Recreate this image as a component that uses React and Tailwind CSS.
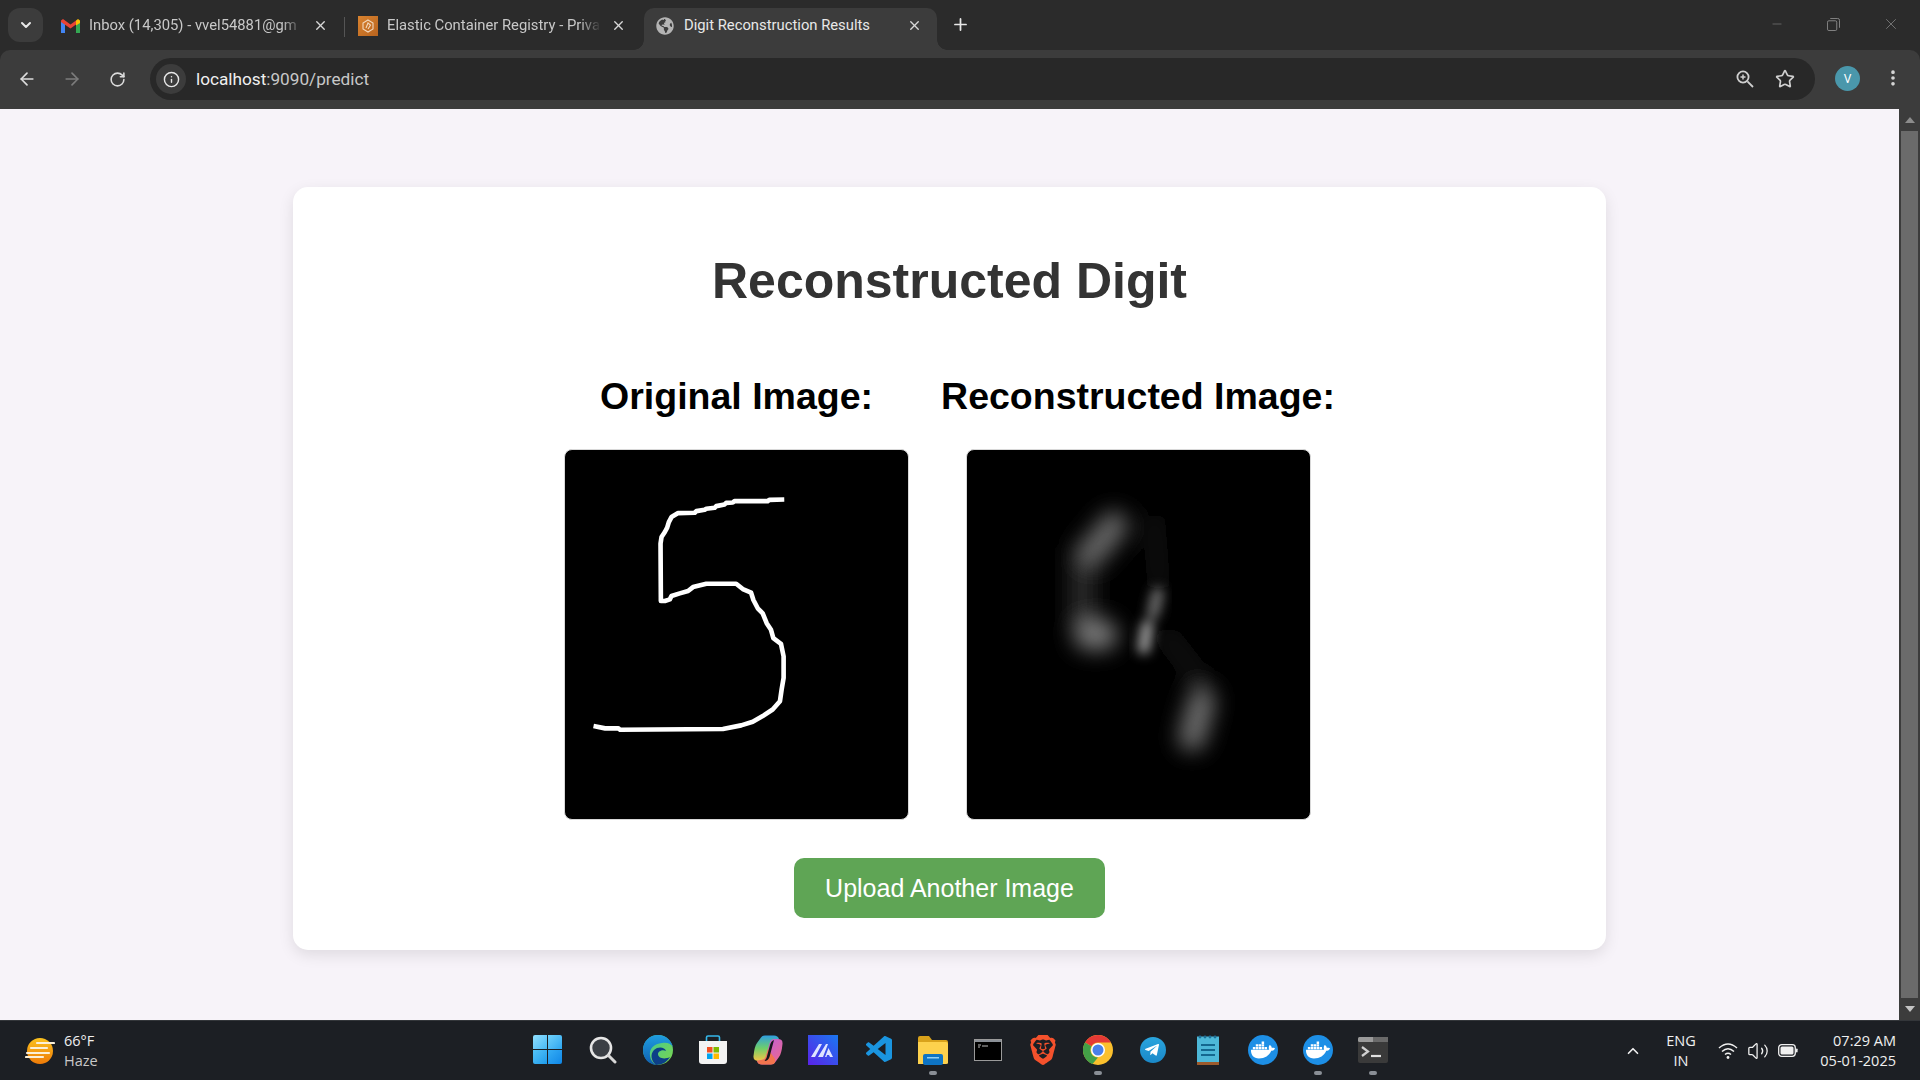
import React from 'react';
import { ArrowLeft, ArrowRight, RotateCw, Info, Star, X, Plus, ChevronDown, ChevronUp, Volume2, Minus, MoreVertical } from 'lucide-react';
import { FaDocker, FaTelegramPlane, FaGlobeAmericas } from 'react-icons/fa';
import { SiBrave } from 'react-icons/si';
import { VscVscode } from 'react-icons/vsc';

const FIVE = "705,177 660,178 655,182 600,182 555,182 550,186 530,187 525,192 500,197 495,202 470,205 465,208 440,212 435,217 385,218 365,230 357,245 352,262 345,275 335,290 332,310 333,483 345,483 360,478 365,468 390,460 415,453 430,441 470,431 560,431 580,447 605,458 612,480 625,505 640,520 652,550 665,570 672,595 695,612 703,650 703,715 697,750 692,785 670,810 640,830 610,847 575,858 520,869 210,871 205,867 165,867 130,860";

function Five() {
  return (
    <svg viewBox="44 28 1034 1112" className="block w-full h-full">
      <polyline points={FIVE} fill="none" stroke="#fff" strokeWidth="14" strokeLinejoin="round" />
    </svg>
  );
}

function Recon() {
  return (
    <svg viewBox="47 28 1034 1112" className="block w-full h-full">
      <defs>
        <filter id="b1" x="-100%" y="-100%" width="300%" height="300%"><feGaussianBlur stdDeviation="32" /></filter>
        <filter id="b2" x="-100%" y="-100%" width="300%" height="300%"><feGaussianBlur stdDeviation="18" /></filter>
      </defs>
      <g filter="url(#b1)" fill="none" strokeLinecap="round">
        <line x1="395" y1="350" x2="395" y2="540" stroke="#2a2a2a" strokeWidth="80" />
        <line x1="610" y1="240" x2="625" y2="430" stroke="#141414" strokeWidth="35" />
        <line x1="650" y1="590" x2="750" y2="720" stroke="#161616" strokeWidth="45" />
        <line x1="490" y1="255" x2="425" y2="335" stroke="#666" strokeWidth="85" />
        <line x1="415" y1="585" x2="455" y2="585" stroke="#7a7a7a" strokeWidth="90" />
        <line x1="755" y1="785" x2="725" y2="895" stroke="#6e6e6e" strokeWidth="80" />
      </g>
      <g filter="url(#b2)" fill="none" strokeLinecap="round">
        <line x1="622" y1="460" x2="608" y2="520" stroke="#6a6a6a" strokeWidth="38" />
        <line x1="590" y1="560" x2="580" y2="625" stroke="#a0a0a0" strokeWidth="36" />
      </g>
    </svg>
  );
}

function Gmail() {
  return (
    <svg viewBox="0 0 19 14" className="w-[19px] h-[14px]">
      <path d="M0 2 V14 H4 V5 Z" fill="#4285f4" />
      <path d="M19 2 V14 H15 V5 Z" fill="#34a853" />
      <path d="M0 1.5 L2 0 L9.5 5.6 L15 1.5 V5.5 L9.5 9.6 L0 3 Z" fill="#ea4335" />
      <path d="M15 1.5 L17 0 L19 1.5 V4 L15 6.5 Z" fill="#fbbc04" />
    </svg>
  );
}

function Elastic() {
  return (
    <div className="w-5 h-5 bg-gradient-to-br from-[#d9832f] to-[#b9641f] flex items-center justify-center">
      <svg viewBox="0 0 20 20" className="w-5 h-5" fill="none" stroke="#f3d8bd" strokeWidth="1.1">
        <path d="M10 4 L15 7 V13 L10 16 L5 13 V7 Z" />
        <path d="M8 12 L10 7 L12.5 9 L10 13" />
      </svg>
    </div>
  );
}

function Tab({ icon, text, active, w, textW, pl, closeMl }) {
  const base = active ? 'bg-[#3c3c3c] rounded-t-[10px] text-[#e8e8e8]' : 'text-[#c8c8c8]';
  return (
    <div className={`relative flex items-center shrink-0 h-[42px] pb-[7px] ${base} ${w} ${pl}`}>
      {active && <div className="absolute left-[-10px] bottom-0 w-[10px] h-[10px] bg-[radial-gradient(circle_at_0_0,transparent_9.5px,#3c3c3c_10px)]" />}
      {active && <div className="absolute right-[-10px] bottom-0 w-[10px] h-[10px] bg-[radial-gradient(circle_at_100%_0,transparent_9.5px,#3c3c3c_10px)]" />}
      <div className="w-5 flex justify-center shrink-0">{icon}</div>
      <div className={`ml-[9px] whitespace-nowrap text-[14.8px] ${textW} ${active ? '' : '[mask-image:linear-gradient(to_right,black_90%,transparent)]'}`}>{text}</div>
      <X className={`shrink-0 w-[15px] h-[15px] text-[#d8d8d8] ${closeMl}`} strokeWidth={2.2} />
    </div>
  );
}

function TabBar() {
  return (
    <div className="h-[50px] bg-[#2b2b2b] flex items-end shrink-0 font-['Roboto',sans-serif]">
      <div className="mb-2 ml-2 w-[35px] h-[34px] rounded-[12px] bg-[#3c3c3c] flex items-center justify-center shrink-0">
        <ChevronDown className="w-4 h-4 text-[#e8e8e8]" strokeWidth={3} />
      </div>
      <Tab w="w-[294px]" pl="pl-[10px] ml-[7px]" textW="w-[214px]" closeMl="ml-[10px]" icon={<Gmail />} text="Inbox (14,305) - vvel54881@gm" />
      <div className="w-px h-[20px] bg-[#555] mb-[13px] shrink-0" />
      <Tab w="w-[299px]" pl="pl-[13px]" textW="w-[214px]" closeMl="ml-[10px]" icon={<Elastic />} text="Elastic Container Registry - Priva" />
      <Tab active w="w-[293px]" pl="pl-[11px]" textW="w-[200px]" closeMl="ml-[23px]" icon={<FaGlobeAmericas className="w-[18px] h-[18px] text-[#b4b4b4]" />} text="Digit Reconstruction Results" />
      <Plus className="w-[19px] h-[19px] text-[#e8e8e8] ml-[14px] mb-[16px] shrink-0" strokeWidth={2.2} />
      <div className="flex-1" />
      <div className="self-stretch flex items-center">
        <Minus className="w-[14px] h-[14px] mr-[43px] mt-[-2px] text-[#8a8a8a]" strokeWidth={1} />
        <svg viewBox="0 0 14 14" className="w-[13px] h-[13px] mr-[42px] mt-[-2px]" fill="none" stroke="#8a8a8a" strokeWidth="1">
          <rect x="0.5" y="3" width="10" height="10.5" rx="1.5" />
          <path d="M3.5 0.5 H11.5 Q13.5 0.5 13.5 2.5 V10.5" />
        </svg>
        <X className="w-[18px] h-[18px] mr-[20px] mt-[-2px] text-[#8a8a8a]" strokeWidth={1} />
      </div>
    </div>
  );
}

function Toolbar() {
  return (
    <div className="h-[59px] bg-[#3c3c3c] rounded-t-[10px] flex items-start shrink-0 pt-2 font-['Roboto',sans-serif]">
      <div className="flex items-center h-[42px] shrink-0">
        <ArrowLeft className="w-[20px] h-[20px] text-[#dcdcdc] ml-[17px]" strokeWidth={2} />
        <ArrowRight className="w-[20px] h-[20px] text-[#7c7c7c] ml-[25px]" strokeWidth={2} />
        <RotateCw className="w-[17px] h-[17px] text-[#dcdcdc] ml-[27px]" strokeWidth={2.2} />
      </div>
      <div className="ml-[24px] w-[1665px] h-[42px] rounded-full bg-[#282828] flex items-center pl-[6px] pr-[20px] shrink-0">
        <div className="w-[30px] h-[30px] rounded-full bg-[#3c3c3c] flex items-center justify-center shrink-0">
          <Info className="w-[17px] h-[17px] text-[#e8e8e8]" strokeWidth={2} />
        </div>
        <div className="ml-[10px] text-[17.2px] text-[#c8c8c8] pt-[1px]"><span className="text-[#f0f0f0]">localhost</span>:9090/predict</div>
        <div className="flex-1" />
        <svg viewBox="0 0 20 20" className="w-[20px] h-[20px]" fill="none" stroke="#cfcfcf" strokeWidth="1.8">
          <circle cx="8" cy="8" r="5.6" />
          <path d="M12.4 12.4 L18 18" />
          <path d="M5.5 8 H10.5 M8 5.5 V10.5" strokeWidth="1.5" />
        </svg>
        <Star className="w-[20px] h-[20px] text-[#d0d0d0] ml-[20px]" strokeWidth={2} />
      </div>
      <div className="ml-[20px] w-[25px] h-[25px] mt-[8px] rounded-full bg-[#4a97ab] text-white text-[12px] flex items-center justify-center shrink-0">V</div>
      <MoreVertical className="w-[20px] h-[20px] mt-[10px] ml-[23px] text-[#d8d8d8] shrink-0" strokeWidth={2.4} />
    </div>
  );
}

function Scrollbar() {
  return (
    <div className="w-[21px] bg-[#3c3c3c] flex flex-col items-center shrink-0">
      <div className="h-[22px] flex items-center justify-center shrink-0 w-full">
        <div className="w-0 h-0 border-x-[5px] border-x-transparent border-b-[6px] border-b-[#8c8c8c]" />
      </div>
      <div className="w-[17px] flex-1 bg-[#6b6b6b]" />
      <div className="h-[22px] flex items-center justify-center shrink-0 w-full">
        <div className="w-0 h-0 border-x-[5px] border-x-transparent border-t-[6px] border-t-[#c4c4c4]" />
      </div>
    </div>
  );
}

function Column({ title, children }) {
  return (
    <div className="flex flex-col items-center">
      <h2 className="text-[37.5px] leading-[44px] font-bold text-black whitespace-nowrap">{title}</h2>
      <div className="mt-[31px] w-[345px] h-[371px] rounded-[8px] bg-black overflow-hidden border border-[#d8d8d8]">{children}</div>
    </div>
  );
}

function Page() {
  return (
    <div className="flex-1 min-h-0 flex bg-[#f7f3f9]">
      <div className="flex-1 min-w-0 pt-[78px] flex justify-center items-start">
        <div className="w-[1313px] h-[763px] bg-white rounded-[15px] shadow-[0_5px_15px_rgba(0,0,0,0.1)] flex flex-col items-center pt-[64px] font-['Liberation_Sans',Arial,sans-serif]">
          <h1 className="text-[50px] leading-[60px] font-bold text-[#333]">Reconstructed Digit</h1>
          <div className="mt-[63px] flex items-start gap-[32px]">
            <Column title="Original Image:"><Five /></Column>
            <Column title="Reconstructed Image:"><Recon /></Column>
          </div>
          <button className="mt-[38px] w-[311px] h-[60px] rounded-[10px] bg-[#5fa555] text-white text-[25px] pt-[1px]">Upload Another Image</button>
        </div>
      </div>
      <Scrollbar />
    </div>
  );
}

function Slot({ children, dot }) {
  return (
    <div className="relative w-[55px] h-[60px] pb-[2px] flex items-center justify-center shrink-0">
      {children}
      {dot && <div className="absolute bottom-[6px] left-[50%] ml-[-4px] w-[8px] h-[4px] rounded-full bg-[#8a8f96]" />}
    </div>
  );
}

const Win = () => (
  <div className="grid grid-cols-2 gap-[1px] w-[29px] h-[29px]">
    <div className="rounded-tl-[2px] bg-gradient-to-br from-[#8fe0ff] to-[#45b9f5]" />
    <div className="rounded-tr-[2px] bg-gradient-to-br from-[#6fd2fb] to-[#2aa6f0]" />
    <div className="rounded-bl-[2px] bg-gradient-to-br from-[#53c4f8] to-[#1c9cec]" />
    <div className="rounded-br-[2px] bg-gradient-to-br from-[#35aef5] to-[#0e86e6]" />
  </div>
);
const Search = () => (
  <svg viewBox="0 0 28 28" className="w-[28px] h-[28px]">
    <circle cx="12" cy="12" r="10" fill="#3b3f45" stroke="#e6e6e6" strokeWidth="2.6" />
    <path d="M19.5 19.5 L26 26" stroke="#d8d8d8" strokeWidth="3" strokeLinecap="round" />
  </svg>
);
const Edge = () => (
  <svg viewBox="0 0 30 30" className="w-[30px] h-[30px]">
    <defs>
      <linearGradient id="e1" x1="0" y1="0" x2="1" y2="1"><stop offset="0" stopColor="#38c6a0" /><stop offset="1" stopColor="#7fd84a" /></linearGradient>
      <linearGradient id="e2" x1="0" y1="0" x2="0" y2="1"><stop offset="0" stopColor="#1f9de0" /><stop offset="1" stopColor="#0f5fb0" /></linearGradient>
    </defs>
    <circle cx="15" cy="15" r="15" fill="url(#e1)" />
    <path d="M0 15 C0 6 7 0 15 0 C23 0 28 5 30 12 C28 8 23 7 19 8 C11 9 6 13 7 21 C7.5 25 10 28 13 30 C5 29 0 23 0 15 Z" fill="url(#e2)" />
    <path d="M13 30 C8 26 7 19 11 15 C15 11 22 12 23 16 C20 14 15 16 15 19 C15 23 21 25 27 22 C24 27 19 30 13 30 Z" fill="#0c3f88" />
  </svg>
);
const Store = () => (
  <svg viewBox="0 0 30 30" className="w-[30px] h-[30px]">
    <path d="M8.5 6 V2.5 Q8.5 1 10 1 H20 Q21.5 1 21.5 2.5 V6" fill="none" stroke="#35b8ea" strokeWidth="1.6" />
    <path d="M1 6 H29 V26 Q29 29 26 29 H4 Q1 29 1 26 Z" fill="#f3f3f3" />
    <rect x="9" y="12" width="5.5" height="5.5" fill="#f25022" />
    <rect x="15.5" y="12" width="5.5" height="5.5" fill="#7fba00" />
    <rect x="9" y="18.5" width="5.5" height="5.5" fill="#00a4ef" />
    <rect x="15.5" y="18.5" width="5.5" height="5.5" fill="#ffb900" />
  </svg>
);
const Copilot = () => (
  <svg viewBox="0 0 30 30" className="w-[30px] h-[30px]">
    <defs>
      <linearGradient id="c1" x1="0" y1="0" x2="0" y2="1"><stop offset="0" stopColor="#2f9fe0" /><stop offset="0.5" stopColor="#6fcf6a" /><stop offset="1" stopColor="#f6c445" /></linearGradient>
      <linearGradient id="c2" x1="0" y1="0" x2="1" y2="1"><stop offset="0" stopColor="#b45fe6" /><stop offset="1" stopColor="#f0688a" /></linearGradient>
    </defs>
    <path d="M8 2.5 Q9 0.5 12 0.5 H21 Q25 0.5 26 4 L22 5 Q18 5 17 9 L13 23 Q12 26 9 26 H5 Q0 26 0.5 21 Q1.5 11 4 8 Z" fill="url(#c1)" />
    <path d="M22 27.5 Q21 29.5 18 29.5 H9 Q5 29.5 4 26 L8 25 Q12 25 13 21 L17 7 Q18 4 21 4 H25 Q30 4 29.5 9 Q28.5 19 26 22 Z" fill="url(#c2)" />
    <path d="M9 29.5 Q5 29.5 4 26 L8 25 Q12 25 13 21 L15 14 L22 24 L22 27.5 Q21 29.5 18 29.5 Z" fill="#f2744e" />
    <path d="M13.5 23 L17 10 Q18 6 21 5 L16.5 22 Q15 26 11.5 26 Z" fill="#15181d" />
  </svg>
);
const MTile = () => (
  <svg viewBox="0 0 30 30" className="w-[30px] h-[30px]">
    <defs><linearGradient id="m1" x1="0" y1="1" x2="1" y2="0"><stop offset="0" stopColor="#5a22e8" /><stop offset="1" stopColor="#1a78f0" /></linearGradient></defs>
    <rect width="30" height="30" fill="url(#m1)" />
    <path d="M3 22 L11 9 H14 L7 22 Z M10 22 L18 9 H20 L15 22 Z M17 22 L20.5 13 L25 22 H22 L21 20 H19 L18.5 22 Z" fill="#dfe4ff" />
  </svg>
);
const Files = () => (
  <svg viewBox="0 0 30 30" className="w-[30px] h-[30px]">
    <path d="M0 3 Q0 1 2 1 H11 L14 5 H28 Q30 5 30 7 V10 H0 Z" fill="#d9a21b" />
    <path d="M0 7 H28 Q30 7 30 9 V28 Q30 29 28 29 H0 Z" fill="#fdd14d" />
    <rect x="5" y="19" width="20" height="11" rx="2" fill="#0e74c4" />
    <rect x="9" y="22" width="12" height="1.5" fill="#8fd0f5" />
  </svg>
);
const Cmd = () => (
  <svg viewBox="0 0 28 22" className="w-[28px] h-[22px]">
    <rect x="0.5" y="0.5" width="27" height="21" fill="#000" stroke="#9a9a9a" />
    <rect x="1" y="1" width="26" height="2" fill="#8a8f96" />
    <path d="M4 6 H7 M4 8 H6 M8 7 H14" stroke="#bbb" strokeWidth="1" />
  </svg>
);
const Brave = () => <SiBrave className="w-[30px] h-[30px] text-[#f4512c]" />;
const Chrome = () => (
  <svg viewBox="0 0 30 30" className="w-[30px] h-[30px]">
    <circle cx="15" cy="15" r="15" fill="#fbc02d" />
    <path d="M15 0 A15 15 0 0 1 28 7.5 L15 7.5 A7.5 7.5 0 0 0 8.5 11.2 L2 7.5 A15 15 0 0 1 15 0 Z" fill="#e53935" />
    <path d="M2 7.5 L8.5 11.2 A7.5 7.5 0 0 0 15 22.5 L9.5 29 A15 15 0 0 1 2 7.5 Z" fill="#43a047" />
    <circle cx="15" cy="15" r="7" fill="#fff" />
    <circle cx="15" cy="15" r="5.5" fill="#4a80e8" />
  </svg>
);
const Telegram = () => (
  <div className="w-[26px] h-[26px] rounded-full bg-gradient-to-b from-[#2aa5de] to-[#1a88c8] flex items-center justify-center">
    <FaTelegramPlane className="w-[16px] h-[16px] text-white ml-[-2px]" />
  </div>
);
const Notepad = () => (
  <svg viewBox="0 0 22 30" className="w-[22px] h-[30px]">
    <rect x="0" y="1.5" width="22" height="25.5" fill="#4db8d8" />
    <rect x="0" y="27" width="22" height="3" fill="#9c5a2c" />
    <g fill="#1d6f96"><circle cx="3" cy="2" r="1.4" /><circle cx="8" cy="2" r="1.4" /><circle cx="13" cy="2" r="1.4" /><circle cx="18" cy="2" r="1.4" /></g>
    <path d="M4 10 H18 M4 15 H18 M4 20 H18" stroke="#14688f" strokeWidth="2" />
  </svg>
);
const Docker = () => (
  <div className="w-[30px] h-[30px] rounded-full bg-[#1d8fe6] flex items-center justify-center">
    <FaDocker className="w-[24px] h-[24px] text-white" />
  </div>
);
const Term = () => (
  <svg viewBox="0 0 30 26" className="w-[30px] h-[26px]">
    <rect width="30" height="26" rx="2" fill="#3a3a3a" />
    <rect width="30" height="5" rx="1.5" fill="#9a9a9a" />
    <rect x="15" y="0" width="15" height="5" fill="#6a6a6a" />
    <path d="M4 10 L10 14.5 L4 19" fill="none" stroke="#d0d0d0" strokeWidth="2.2" />
    <path d="M13 19 H23" stroke="#e0e0e0" strokeWidth="2.2" />
  </svg>
);

function Taskbar() {
  return (
    <div className="h-[60px] shrink-0 bg-[#1c1f24] border-t border-t-[#33363a] flex items-center text-[#f0f0f0] font-['Open_Sans',sans-serif]">
      <div className="w-[520px] shrink-0 flex items-center pl-[25px]">
        <svg viewBox="0 0 30 28" className="w-[30px] h-[28px] shrink-0">
          <defs><linearGradient id="w1" x1="0" y1="0" x2="0" y2="1"><stop offset="0" stopColor="#fbc21e" /><stop offset="1" stopColor="#ee7a08" /></linearGradient></defs>
          <circle cx="15" cy="14" r="13" fill="url(#w1)" />
          <path d="M12 6 H29 M6 11 H22 M2 16 H24 M1 20 H18" stroke="#fbf0d8" strokeWidth="2.2" strokeLinecap="round" />
        </svg>
        <div className="ml-[9px] text-[14.5px] leading-[20px]">
          <div>66°F</div>
          <div className="text-[#c8c8c8]">Haze</div>
        </div>
      </div>
      <Slot><Win /></Slot>
      <Slot><Search /></Slot>
      <Slot><Edge /></Slot>
      <Slot><Store /></Slot>
      <Slot><Copilot /></Slot>
      <Slot><MTile /></Slot>
      <Slot><VscVscode className="w-[32px] h-[32px] text-[#1a95e0] ml-[4px]" /></Slot>
      <Slot dot><Files /></Slot>
      <Slot><Cmd /></Slot>
      <Slot><Brave /></Slot>
      <Slot dot><Chrome /></Slot>
      <Slot><Telegram /></Slot>
      <Slot><Notepad /></Slot>
      <Slot><Docker /></Slot>
      <Slot dot><Docker /></Slot>
      <Slot dot><Term /></Slot>
      <div className="flex-1 flex items-center min-w-0">
        <ChevronUp className="w-[18px] h-[18px] ml-[224px] shrink-0" strokeWidth={2.2} />
        <div className="ml-[17px] w-[44px] text-center text-[14.5px] leading-[20px] shrink-0">
          <div>ENG</div>
          <div>IN</div>
        </div>
        <svg viewBox="0 0 20 18" className="ml-[15px] w-[20px] h-[18px] shrink-0" fill="none" stroke="#f0f0f0" strokeWidth="1.5">
          <path d="M1 6 Q10 -2 19 6 M4 9.5 Q10 4 16 9.5 M7 12.5 Q10 10 13 12.5" />
          <circle cx="10" cy="15.5" r="1.4" fill="#f0f0f0" stroke="none" />
        </svg>
        <Volume2 className="ml-[9px] w-[22px] h-[22px] shrink-0" strokeWidth={1.4} />
        <svg viewBox="0 0 20 13" className="ml-[9px] w-[20px] h-[13px] shrink-0" fill="none">
          <rect x="0.7" y="0.7" width="16.6" height="11.6" rx="3" stroke="#f0f0f0" strokeWidth="1.3" />
          <rect x="2.5" y="2.5" width="13" height="8" rx="1.5" fill="#f0f0f0" />
          <rect x="18" y="4.5" width="1.6" height="4" rx="0.8" fill="#f0f0f0" />
        </svg>
        <div className="ml-auto mr-[24px] text-right text-[14.5px] leading-[20px] shrink-0 whitespace-nowrap">
          <div>07:29 AM</div>
          <div>05-01-2025</div>
        </div>
      </div>
    </div>
  );
}

export default function App() {
  return (
    <div className="w-[1920px] h-[1080px] overflow-hidden flex flex-col bg-[#2b2b2b]">
      <TabBar />
      <Toolbar />
      <Page />
      <Taskbar />
    </div>
  );
}
